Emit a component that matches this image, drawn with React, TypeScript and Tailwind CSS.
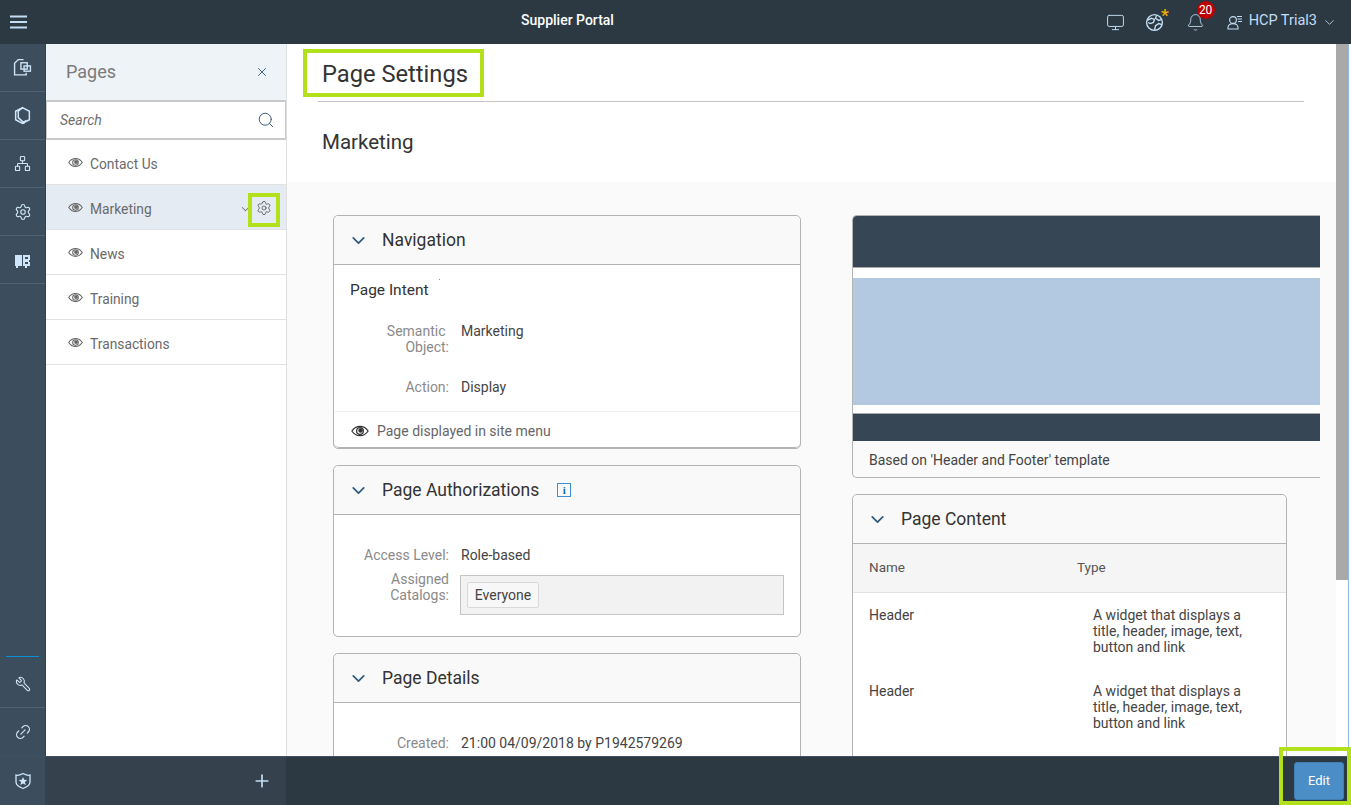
import React from 'react'
import { Bell, ChevronDown, Link2, Monitor, Network, Plus, Search, Settings, Wrench, X } from 'lucide-react'

const pages = ['Contact Us', 'Marketing', 'News', 'Training', 'Transactions']

const RailItem: React.FC<{ children: React.ReactNode }> = ({ children }) => (
  <div className="h-12 flex items-center justify-center border-b border-[#4f6172] text-[#cfe6fa]">{children}</div>
)

const Highlight: React.FC<{ className: string }> = ({ className }) => (
  <div className={`absolute border-[4px] border-[#b2e01b] pointer-events-none ${className}`}></div>
)

const EyeIcon: React.FC<{ size?: number; className?: string }> = ({ size = 15, className }) => (
  <svg width={size} height={size} viewBox="0 0 16 16" fill="none" stroke="currentColor" strokeWidth="1.1" className={className}>
    <path d="M0.800 8C2.600 5.200 5 3.800 8 3.800s5.400 1.400 7.200 4.200c-1.800 2.800-4.200 4.200-7.200 4.200S2.600 10.800 .8 8z" />
    <circle cx="8" cy="8" r="3" />
    <circle cx="8.500" cy="7.500" r="2" fill="currentColor" stroke="none" />
  </svg>
)

const Card: React.FC<{ title: string; extra?: React.ReactNode; className?: string; children: React.ReactNode }> = ({
  title,
  extra,
  className,
  children,
}) => (
  <section className={`border border-[#b3b3b3] rounded-[5px] bg-white shrink-0 ${className ?? ''}`}>
    <header className="h-[49px] flex items-center bg-[#f9f9f9] border-b border-[#b3b3b3] rounded-t-[5px] pl-[14px]">
      <ChevronDown size={21} strokeWidth={2} className="text-[#2f5a80]" />
      <h3 className="ml-[13px] text-[17.5px] text-[#333333]">{title}</h3>
      {extra}
    </header>
    {children}
  </section>
)

const Field: React.FC<{ label: React.ReactNode; value: React.ReactNode; className?: string }> = ({ label, value, className }) => (
  <div className={`flex text-[14px] leading-4 ${className ?? ''}`}>
    <div className="w-[115px] shrink-0 text-right text-[#8a8a8a]">{label}</div>
    <div className="ml-3 text-[#444444]">{value}</div>
  </div>
)

const WIDGET_TEXT = 'A widget that displays a title, header, image, text, button and link'

const App: React.FC = () => {
  return (
    <div className="relative w-[1351px] h-[805px] overflow-hidden flex flex-col bg-white font-['Roboto',sans-serif]">
      {/* Top bar */}
      <div className="h-11 shrink-0 bg-[#2c3943] flex items-center text-[#c3def5] relative">
        <svg className="ml-[10px]" width="18" height="14" viewBox="0 0 18 14" fill="currentColor">
          <rect x="0" y="0.500" width="17" height="2" />
          <rect x="0" y="6" width="17" height="2" />
          <rect x="0" y="11.500" width="17" height="2" />
        </svg>
        <div className="absolute left-[521px] top-[10px] text-white text-[14px] font-medium">Supplier Portal</div>
        <div className="ml-auto flex items-center mr-[14px]">
          <Monitor size={19} strokeWidth={1.2} />
          <div className="relative ml-[20px]">
            <svg width="19" height="19" viewBox="0 0 18 18" fill="none" stroke="currentColor" strokeWidth="1.3">
              <circle cx="9" cy="9" r="7.500" />
              <path d="M2 7l4-2 3 1-1 3-3 1-2-1M9 16l1-4 3-2 3 1M11 2l-1 3 3 2 3-1" />
            </svg>
            <span className="absolute -top-[6px] -right-[5px] text-[17px] leading-4 font-bold text-[#f0ab00]">*</span>
          </div>
          <div className="relative ml-[22px]">
            <Bell size={19} strokeWidth={1.1} />
            <span className="absolute -top-[12px] left-[11px] w-[18px] h-[18px] rounded-full bg-[#bb0000] text-white text-[12px] leading-[18px] text-center">20</span>
          </div>
          <svg className="ml-[22px]" width="16" height="16" viewBox="0 0 16 16" fill="none" stroke="currentColor" strokeWidth="1.1">
            <circle cx="6" cy="6" r="3.400" />
            <path d="M1 15v-1.500C1 11 3 9.600 6 9.600s5 1.400 5 3.900V15zM10 2.500h5M10.500 5h4.500M11 7.500h4" />
          </svg>
          <span className="ml-[6px] text-[14.500px] -mt-[3px]">HCP Trial3</span>
          <ChevronDown size={15} strokeWidth={1.3} className="ml-[5px]" />
        </div>
      </div>

      <div className="flex-1 min-h-0 flex">
        {/* Left rail */}
        <div className="w-[46px] shrink-0 bg-[#3c4e5d] border-r border-[#33424f] flex flex-col">
          <RailItem>
            <svg width="19" height="19" viewBox="0 0 18 18" fill="none" stroke="currentColor" strokeWidth="1.3">
              <path d="M10 1.500H5L1.500 5v11h11v-2" />
              <rect x="7.500" y="4.500" width="6" height="6" />
              <rect x="10.500" y="7.500" width="6" height="5" />
            </svg>
          </RailItem>
          <RailItem>
            <svg width="19" height="19" viewBox="0 0 18 18" fill="none" stroke="currentColor" strokeWidth="1.4">
              <path d="M9 1.500l6.500 3.500v8L9 16.500l-6.500-3.500V5zM9 1.500L5 5v6l6 5.500M9 16.500l3.500-3" />
            </svg>
          </RailItem>
          <RailItem>
            <Network size={17} strokeWidth={1.5} />
          </RailItem>
          <RailItem>
            <Settings size={18} strokeWidth={1.5} />
          </RailItem>
          <RailItem>
            <svg width="18" height="18" viewBox="0 0 18 18" fill="currentColor">
              <path d="M1 4h7v11H4v2H2v-2H1zM9 4h7v5h-1v2h1v4h-3v2h-2v-2H9z" />
              <path d="M11 6h3v2h-3zM11 11h3v2h-3z" fill="#3c4e5d" />
            </svg>
          </RailItem>
          <div className="mt-auto">
            <div className="mx-[6px] mb-[3px] border-t border-[#0a8fd9]"></div>
            <div className="h-12 flex items-center justify-center border-b border-[#4f6172] text-[#cfe6fa]">
              <Wrench size={16} strokeWidth={1.6} className="-scale-x-100" />
            </div>
            <div className="h-12 flex items-center justify-center text-[#cfe6fa]">
              <Link2 size={18} strokeWidth={1.6} className="-rotate-45" />
            </div>
          </div>
        </div>

        {/* Pages panel */}
        <aside className="w-[241px] shrink-0 bg-white border-r border-[#e0e0e0] flex flex-col">
          <div className="h-14 shrink-0 bg-[#eef3f8] flex items-center justify-between pl-5 pr-[17px]">
            <span className="text-[18px] -mt-[2px] text-[#7a7a7a]">Pages</span>
            <X size={14} strokeWidth={1.6} className="text-[#34597a]" />
          </div>
          <div className="h-10 shrink-0 border-2 border-[#c9c9c9] border-r border-l flex items-center justify-between pl-[13px] pr-[10px]">
            <span className="text-[14px] italic text-[#6e6e6e]">Search</span>
            <Search size={18} strokeWidth={1.3} className="text-[#34597a]" />
          </div>
          {pages.map((page) => (
            <div
              key={page}
              className={`h-[45px] shrink-0 flex items-center pl-[22px] border-b border-[#e2e2e2] relative ${
                page === 'Marketing' ? 'bg-[#e5ebf2]' : ''
              }`}
            >
              <EyeIcon size={15} className="text-[#666666]" />
              <span className="ml-[7px] pt-[4px] text-[13.800px] text-[#6a6a6a]">{page}</span>
              {page === 'Marketing' && (
                <>
                  <span className="absolute left-[196px] top-[19px] w-[7px] h-[7px] border-b border-l border-[#666666] -rotate-45 scale-75"></span>
                  <Settings size={16} strokeWidth={1.1} className="absolute left-[210px] top-[15px] text-[#444444]" />
                </>
              )}
            </div>
          ))}
        </aside>

        {/* Main */}
        <main className="flex-1 min-w-0 flex flex-col overflow-hidden bg-[#fafafa]">
          <div className="h-[138px] shrink-0 bg-white pt-[14px] pl-[31px] pr-[32px]">
            <div className="h-[44px] border-b border-[#c4c4c4] pl-[4px]">
              <h1 className="text-[23.700px] leading-[32px] text-[#333333]">Page Settings</h1>
            </div>
            <h2 className="mt-[26px] ml-[4px] text-[20.500px] leading-[28px] text-[#333333]">Marketing</h2>
          </div>
          <div className="flex-1 min-h-0 pt-[33px] pl-[46px] flex gap-[51px] overflow-hidden">
            <div className="w-[468px] shrink-0 flex flex-col gap-[16px]">
              <Card title="Navigation">
                <div className="pt-[15px] pl-4 text-[15.500px] leading-5 text-[#333333] flex items-start">
                  Page Intent
                  <span className="ml-[10px] -mt-[1px] w-px h-px bg-[#5b9bd5]"></span>
                </div>
                <Field className="mt-[23px]" label={<>Semantic&nbsp;<br />Object:</>} value="Marketing" />
                <Field className="mt-[24px]" label="Action:" value="Display" />
                <div className="mt-[16px] h-[37px] pt-[3px] border-t border-b border-t-[#f2f2f2] border-b-[#b3b3b3] flex items-center pl-[17px] text-[14px] text-[#666666] rounded-b-[5px]">
                  <EyeIcon size={18} className="text-[#333333]" />
                  <span className="ml-[8px]">Page displayed in site menu</span>
                </div>
              </Card>
              <Card
                title="Page Authorizations"
                extra={
                  <span className="ml-[18px] w-[14px] h-[14px] border border-[#3f8fd0] text-[#0f6fb5] text-[11px] leading-3 font-bold text-center font-['Liberation_Serif',serif]">i</span>
                }
              >
                <div className="h-[121px] pt-[32px]">
                  <Field label="Access Level:" value="Role-based" />
                  <div className="flex mt-[12px] text-[14px] leading-4">
                    <div className="w-[115px] shrink-0 -mt-[4px] text-right text-[#8a8a8a]">Assigned<br />Catalogs:</div>
                    <div className="ml-[11px] w-[324px] h-10 bg-[#f2f2f2] border border-[#c4c4c4] flex items-center pl-[6px]">
                      <span className="h-[26px] w-[72px] text-center border border-[#d9d9d9] rounded-[2px] bg-[#f7f7f7] text-[#444444] text-[14px] leading-[25px]">Everyone</span>
                    </div>
                  </div>
                </div>
              </Card>
              <Card title="Page Details">
                <div className="h-[60px] pt-[32px]">
                  <Field label="Created:" value="21:00 04/09/2018 by P1942579269" />
                </div>
              </Card>
            </div>
            <div className="w-[435px] shrink-0 flex flex-col gap-[16px]">
              <div className="w-[468px] h-[263px] shrink-0 border border-[#b3b3b3] border-r-0 rounded-l-[5px] flex flex-col">
                <div className="h-[52px] bg-[#364655] rounded-tl-[4px] border-b border-[#aaaaaa]"></div>
                <div className="h-[10px] bg-white"></div>
                <div className="h-[127px] bg-[#b3c9e1]"></div>
                <div className="h-[9px] bg-white border-b border-[#aaaaaa]"></div>
                <div className="h-[27px] bg-[#364655]"></div>
                <div className="flex-1 pl-4 pt-[2px] flex items-center text-[14px] text-[#444444]">Based on 'Header and Footer' template</div>
              </div>
              <Card title="Page Content">
                <div className="h-[49px] pb-[2px] bg-[#f5f5f5] border-b border-[#e2e2e2] flex items-center pl-4 text-[13.500px] text-[#555555]">
                  <span className="w-[208px]">Name</span>
                  <span>Type</span>
                </div>
                <div className="flex pl-4 pt-[14px] text-[14px] leading-4 text-[#444444]">
                  <span className="w-[224px] shrink-0">Header</span>
                  <span className="w-[165px]">{WIDGET_TEXT}</span>
                </div>
                <div className="flex pl-4 pt-[28px] pb-8 text-[14px] leading-4 text-[#444444]">
                  <span className="w-[224px] shrink-0">Header</span>
                  <span className="w-[165px]">{WIDGET_TEXT}</span>
                </div>
              </Card>
            </div>
          </div>
        </main>

        {/* Scrollbar */}
        <div className="w-[15px] shrink-0 bg-white pr-[2px] flex">
          <div className="flex-1 border-r border-[#8fb8da]">
            <div className="h-[536px] bg-[#a9a9a9]"></div>
          </div>
        </div>
      </div>

      {/* Bottom bar */}
      <div className="h-[49px] shrink-0 bg-[#2c3943] border-t border-[#3f5161] flex items-center text-[#c3def5] relative">
        <div className="w-[46px] h-full bg-[#3c4e5d] border-r border-[#33424f] flex items-center justify-center text-[#cfe6fa]">
          <svg width="18" height="18" viewBox="0 0 18 18" fill="none" stroke="currentColor" strokeWidth="1.300">
            <path d="M2 3c2 1 4 0 7-1.500C12 3 14 4 16 3v7c0 3-3 5-7 6.500C5 15 2 13 2 10z" />
            <path d="M9 5l1.200 2.800 3 .2-2.300 2 .8 3L9 11.400 6.300 13l.8-3-2.300-2 3-.2z" fill="currentColor" stroke="none" />
          </svg>
        </div>
        <div className="w-[240px] h-full bg-[#35424d] flex items-center justify-end pr-[14px]">
          <Plus size={20} strokeWidth={2} />
        </div>
        <button className="ml-auto mr-[7px] w-[50px] h-[38px] rounded-[3px] bg-[#4b8dc6] border border-[#3f7fb5] text-white text-[13px]">Edit</button>
      </div>

      {/* Annotation boxes */}
      <Highlight className="left-[303px] top-[49px] w-[181px] h-[48px]" />
      <Highlight className="left-[248px] top-[193px] w-[32px] h-[34px]" />
      <Highlight className="left-[1279px] top-[747px] w-[72px] h-[58px]" />
    </div>
  )
}

export default App
